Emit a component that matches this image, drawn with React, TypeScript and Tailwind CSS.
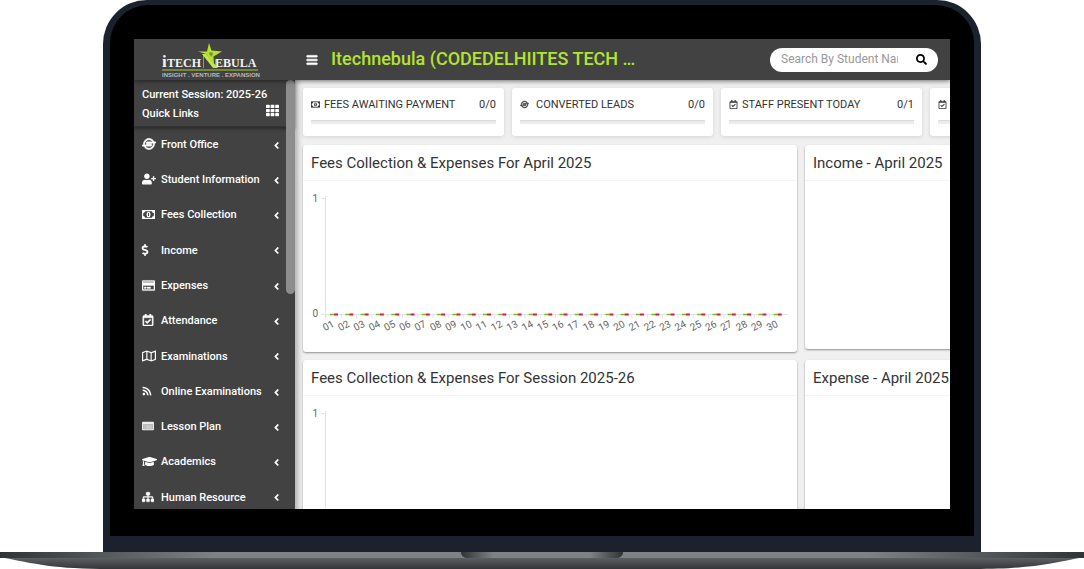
import type { IconType } from "react-icons";
import {
    FaAngleLeft,
    FaBars,
    FaDollarSign,
    FaGraduationCap,
    FaIoxhost,
    FaRegCalendarCheck,
    FaRegCreditCard,
    FaRegMap,
    FaRss,
    FaSearch,
    FaSitemap,
    FaTh,
    FaUserPlus,
} from "react-icons/fa";

function MoneyIcon() {
    return (
        <svg width="1em" height="1em" viewBox="0 0 13 13">
            <path d="M0 2h13v9H0z" fill="currentColor" />
            <path d="M3 3.200h7c0 1 .8 1.800 1.800 1.800v3c-1 0-1.800.8-1.800 1.800H3C3 8.800 2.200 8 1.200 8V5C2.200 5 3 4.200 3 3.200z" className="fill-[var(--icon-bg)]" />
            <ellipse cx="6.500" cy="6.500" rx="2" ry="2.700" fill="currentColor" />
            <path d="M6.500 5v3" className="stroke-[var(--icon-bg)]" />
        </svg>
    );
}

function ListIcon() {
    return (
        <svg width="1em" height="1em" viewBox="0 0 13 13">
            <path d="M1 2h11q1 0 1 1v7q0 1-1 1H1q-1 0-1-1V3q0-1 1-1z" fill="#ececec" />
            <path d="M1 4.500h11v5.500H1z" fill="#b4b4b4" />
            <path d="M2 6.500h1M4 6.500h7M2 8.500h1M4 8.500h7" stroke="#e8e8e8" strokeWidth="0.800" />
        </svg>
    );
}

const menu: { label: string; icon: IconType; size: string }[] = [
    { label: "Front Office", icon: FaIoxhost, size: "text-[14px] [&_svg]:stroke-current [&_svg]:stroke-[36px]" },
    { label: "Student Information", icon: FaUserPlus, size: "text-[14px]" },
    { label: "Fees Collection", icon: MoneyIcon, size: "text-[13px]" },
    { label: "Income", icon: FaDollarSign, size: "text-[12px] [&_svg]:-ml-[3px]" },
    { label: "Expenses", icon: FaRegCreditCard, size: "text-[13px] [&_svg]:stroke-current [&_svg]:stroke-[16px]" },
    { label: "Attendance", icon: FaRegCalendarCheck, size: "text-[12px] [&_svg]:stroke-current [&_svg]:stroke-[16px]" },
    { label: "Examinations", icon: FaRegMap, size: "text-[14px]" },
    { label: "Online Examinations", icon: FaRss, size: "text-[10px]" },
    { label: "Lesson Plan", icon: ListIcon, size: "text-[12px]" },
    { label: "Academics", icon: FaGraduationCap, size: "text-[15px]" },
    { label: "Human Resource", icon: FaSitemap, size: "text-[12px] [&_svg]:stroke-current [&_svg]:stroke-[24px]" },
];

const stats: { label: string; value: string; icon: IconType; gap: string }[] = [
    { label: "FEES AWAITING PAYMENT", value: "0/0", icon: MoneyIcon, gap: "mr-1" },
    { label: "CONVERTED LEADS", value: "0/0", icon: FaIoxhost, gap: "mr-[7px] [&_svg]:stroke-current [&_svg]:stroke-[24px]" },
    { label: "STAFF PRESENT TODAY", value: "0/1", icon: FaRegCalendarCheck, gap: "mr-1" },
    { label: "", value: "", icon: FaRegCalendarCheck, gap: "mr-1" },
];

const days = Array.from({ length: 30 }, (_, i) => String(i + 1).padStart(2, "0"));

function Logo() {
    return (
        <svg width="100" height="36" viewBox="0 0 100 36" role="img" aria-label="iTechNebula">
            <g fill="#f3f3f3" fontFamily="Liberation Serif, serif" fontWeight="bold">
                <text x="2" y="25" fontSize="17">i</text>
                <text x="7" y="25" fontSize="12">TECH</text>
                <text x="55" y="25" fontSize="12">EBULA</text>
            </g>
            <path d="M43.500 26V13M55.500 26v-9" stroke="#8aa832" />
            <path d="M42 12h4l12 14h-5z" fill="#c3e845" />
            <path d="M49 1l2.500 7.500 10.500 1-8.500 5 .5 8-5-6.500-3-4-8-2.500h9z" fill="#b5e02c" />
            <path d="M50 10l3 1-1 4-3-3z" fill="#424242" opacity="0.500" />
            <path d="M2 28h96" stroke="#a5cf2e" />
            <text x="2" y="35" fontSize="6" fontFamily="Liberation Sans, sans-serif" fontWeight="bold" fill="#b9b9b9">
                INSIGHT . VENTURE . EXPANSION
            </text>
        </svg>
    );
}

function Header() {
    return (
        <header className="relative z-10 flex h-[41px] shrink-0 items-center bg-[#424242] shadow-[0_1px_5px_rgba(0,0,0,0.5)]">
            <a href="#" className="ml-[26px] w-[146px]">
                <Logo />
            </a>
            <button aria-label="Toggle menu" className="text-xs text-white [&_svg]:stroke-current [&_svg]:stroke-[30px]">
                <FaBars />
            </button>
            <h1 className="ml-[13px] flex-1 truncate pb-[2px] text-lg font-medium text-[#b4e42f]">
                Itechnebula (CODEDELHIITES TECH …
            </h1>
            <form className="mr-3 flex h-[24px] w-[168px] items-center rounded-full bg-white pr-[11px] pl-[11px]">
                <input
                    aria-label="Search by student name"
                    placeholder="Search By Student Name"
                    className="mr-[18px] w-0 flex-1 pb-[2px] text-xs text-gray-700 outline-none placeholder:text-[#999]"
                />
                <button type="button" aria-label="Search" className="text-[11px] text-black">
                    <FaSearch />
                </button>
            </form>
        </header>
    );
}

function Sidebar() {
    return (
        <aside className="relative flex w-[161px] shrink-0 flex-col bg-[#424242] text-white">
            <div className="flex h-[47px] items-end justify-between border-b border-[#333] pr-4 pb-[3px] pl-2 shadow-[0_2px_3px_rgba(0,0,0,0.35)]">
                <div className="text-[11px] leading-[19px] font-medium whitespace-nowrap">
                    <p>Current Session: 2025-26</p>
                    <p>Quick Links</p>
                </div>
                <button aria-label="Quick links" className="mb-[6px] -ml-4 text-[13px]">
                    <FaTh />
                </button>
            </div>
            <nav className="flex flex-1 flex-col justify-between pt-2 pb-[1px] [--icon-bg:#424242]">
                {menu.map(({ label, icon: Icon, size }) => (
                    <a key={label} href="#" className="flex h-5 items-center pr-[13px] pl-2 text-[11px] font-medium">
                        <span className={"w-[19px] pb-[2px] " + size}>
                            <Icon />
                        </span>
                        <span className="flex-1 whitespace-nowrap">{label}</span>
                        <FaAngleLeft />
                    </a>
                ))}
            </nav>
            <div className="absolute top-0 right-0 h-[214px] w-[9px] rounded-full bg-[#8d8d8d]" />
        </aside>
    );
}

function Card({ title, className, children }: { title: string; className?: string; children?: React.ReactNode }) {
    return (
        <section className={"rounded-[3px] bg-white shadow-[0_1px_2px_rgba(0,0,0,0.4)] " + className}>
            <h2 className="h-9 border-b border-[#f4f4f4] px-2 text-[15px] leading-9 whitespace-nowrap text-[#333]">
                {title}
            </h2>
            {children}
        </section>
    );
}

function Chart({ labels }: { labels: string[] }) {
    return (
        <svg width="494" height="170" viewBox="0 0 494 170" fontFamily="Roboto, sans-serif" fontSize="10" fill="#666">
            <path d="M22.500 15v122M18 17.500h5M18 133.500h467" stroke="#e3e3e3" fill="none" />
            <text x="15" y="21" textAnchor="end">1</text>
            {labels.length > 0 && <text x="15" y="136" textAnchor="end">0</text>}
            {labels.map((label, i) => {
                const x = 23 + i * 15.3;
                return (
                    <g key={label}>
                        <path d={`M${x} 133v4`} stroke="#e3e3e3" />
                        <path d={`M${x + 4} 133.500h4`} stroke="#6fc01c" strokeWidth="1.500" />
                        <path d={`M${x + 8} 133.500h4`} stroke="#e3173e" strokeWidth="2" />
                        <text textAnchor="end" transform={`translate(${x + 9} 145) rotate(-28)`}>
                            {label}
                        </text>
                    </g>
                );
            })}
        </svg>
    );
}

function Dashboard() {
    return (
        <main className="min-w-0 flex-1 overflow-hidden bg-[#f0f0f0] shadow-[inset_5px_0_5px_-2px_rgba(0,0,0,0.25)]">
            <div className="w-[844px] p-2">
                <div className="grid grid-cols-4 gap-2">
                    {stats.map(({ label, value, icon: Icon, gap }, i) => (
                        <div key={i} className="h-12 rounded-[3px] bg-white px-2 pt-2 shadow-[0_1px_4px_rgba(0,0,0,0.12)]">
                            <div className="flex h-[17px] items-center text-[11px] leading-[17px] whitespace-nowrap text-[#333] [--icon-bg:#fff]">
                                <span className={"text-[9px] " + gap}>
                                    <Icon />
                                </span>
                                <span className="flex-1">{label}</span>
                                <span>{value}</span>
                            </div>
                            <div className="mt-[7px] h-1 bg-[#ececec] shadow-[inset_0_1px_1px_rgba(0,0,0,0.08)]" />
                        </div>
                    ))}
                </div>
                <div className="mt-[9px] grid grid-cols-[494px_1fr] items-start gap-2">
                    <Card title="Fees Collection & Expenses For April 2025" className="h-[207px]">
                        <Chart labels={days} />
                    </Card>
                    <Card title="Income - April 2025" className="h-[204px]" />
                    <Card title="Fees Collection & Expenses For Session 2025-26" className="h-[207px]">
                        <Chart labels={[]} />
                    </Card>
                    <Card title="Expense - April 2025" className="h-[204px]" />
                </div>
            </div>
        </main>
    );
}

function LaptopBase() {
    return (
        <svg className="block h-[17px] w-full shrink-0" viewBox="0 0 1084 17" preserveAspectRatio="none" aria-hidden="true">
            <defs>
                <linearGradient id="edge">
                    <stop offset="0" stopColor="#303335" />
                    <stop offset="0.200" stopColor="#7e8285" />
                    <stop offset="0.800" stopColor="#7e8285" />
                    <stop offset="1" stopColor="#303335" />
                </linearGradient>
                <linearGradient id="under" x2="0" y2="1">
                    <stop offset="0" stopColor="#606367" />
                    <stop offset="1" stopColor="#343537" />
                </linearGradient>
                <linearGradient id="notch">
                    <stop offset="0" stopColor="#303234" />
                    <stop offset="0.200" stopColor="#7e8285" />
                    <stop offset="0.800" stopColor="#7e8285" />
                    <stop offset="1" stopColor="#303234" />
                </linearGradient>
            </defs>
            <path d="M0 5h1084c-35 7-55 12-110 12H110C55 17 35 12 0 5z" fill="url(#under)" />
            <path d="M0 0h1084v6H0z" fill="url(#edge)" />
            <path d="M461 0h162c0 4-3 6-7 6H468c-4 0-7-2-7-6z" fill="url(#notch)" />
        </svg>
    );
}

export default function App() {
    return (
        <div className="flex h-screen flex-col bg-white font-[Roboto,sans-serif]">
            <div className="mx-[103px] flex min-h-0 flex-1 rounded-t-[44px] bg-[#1b212d] px-[7px] pt-[5px] pb-4">
                <div className="flex min-w-0 flex-1 rounded-t-[38px] bg-black px-6 pt-[34px] pb-[27px]">
                    <div className="flex min-w-0 flex-1 flex-col overflow-hidden">
                        <Header />
                        <div className="flex min-h-0 flex-1">
                            <Sidebar />
                            <Dashboard />
                        </div>
                    </div>
                </div>
            </div>
            <LaptopBase />
        </div>
    );
}
